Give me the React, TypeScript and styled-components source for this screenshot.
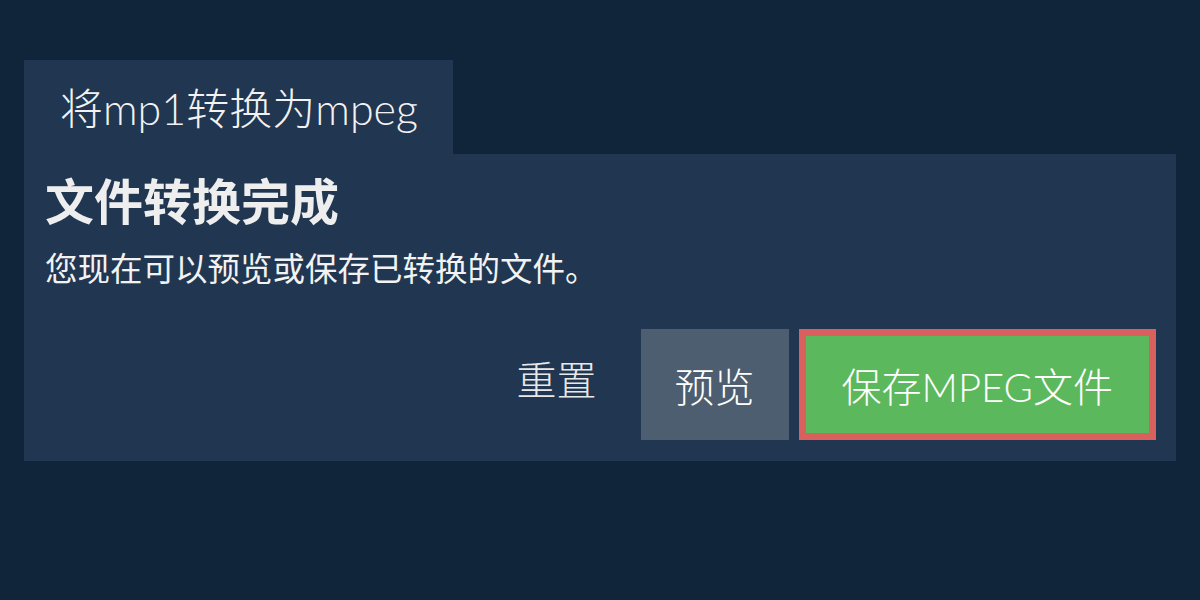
import React from "react";
import styled, { createGlobalStyle } from "styled-components";

const GlobalStyle = createGlobalStyle`
  html, body {
    margin: 0;
    padding: 0;
    background: #10243a;
  }
  body {
    font-family: Lato, "Noto Sans CJK SC", sans-serif;
    color: #ffffff;
  }
`;

const Page = styled.div`
  width: 1200px;
  height: 600px;
  box-sizing: border-box;
  padding: 60px 24px 0 24px;
  background: #10243a;
`;

const Tab = styled.div`
  display: inline-flex;
  align-items: center;
  height: 94px;
  padding: 0 35px 2px 36px;
  box-sizing: border-box;
  background: #213650;
  font-size: 43px;
  font-weight: 300;
  color: #f2f2f2;
`;

const Panel = styled.div`
  display: flex;
  flex-direction: column;
  padding: 17px 20px 21px 21px;
  background: #213650;
`;

const Title = styled.h1`
  margin: 0;
  font-size: 49px;
  font-weight: 700;
  line-height: 60px;
  color: #eeeeee;
`;

const Message = styled.p`
  margin: 17px 0 0 0;
  font-size: 32.5px;
  font-weight: 400;
  line-height: 42px;
  color: #f2f2f2;
`;

const Actions = styled.div`
  display: flex;
  justify-content: flex-end;
  align-items: stretch;
  gap: 10px;
  margin-top: 39px;
`;

const Button = styled.button<{ $variant: "link" | "plain" | "primary" }>`
  height: 111px;
  box-sizing: border-box;
  padding: 0 ${(p) => (p.$variant === "plain" ? "34px" : "36px")};
  font-family: Lato, "Noto Sans CJK SC", sans-serif;
  font-size: 40px;
  font-weight: 300;
  cursor: pointer;
  border: ${(p) => (p.$variant === "primary" ? "7px solid #d9605d" : "none")};
  background: ${(p) =>
    p.$variant === "primary"
      ? "#5cb85c"
      : p.$variant === "plain"
      ? "#4d5e70"
      : "transparent"};
  padding-bottom: ${(p) => (p.$variant === "link" ? "14px" : "0")};
  margin-right: ${(p) => (p.$variant === "link" ? "-2px" : "0")};
  color: ${(p) => (p.$variant === "link" ? "#e8e8e8" : "#ffffff")};
`;

export default function App() {
  return (
    <Page>
      <GlobalStyle />
      <Tab>将mp1转换为mpeg</Tab>
      <Panel>
        <Title>文件转换完成</Title>
        <Message>您现在可以预览或保存已转换的文件。</Message>
        <Actions>
          <Button $variant="link">重置</Button>
          <Button $variant="plain">预览</Button>
          <Button $variant="primary">保存MPEG文件</Button>
        </Actions>
      </Panel>
    </Page>
  );
}
